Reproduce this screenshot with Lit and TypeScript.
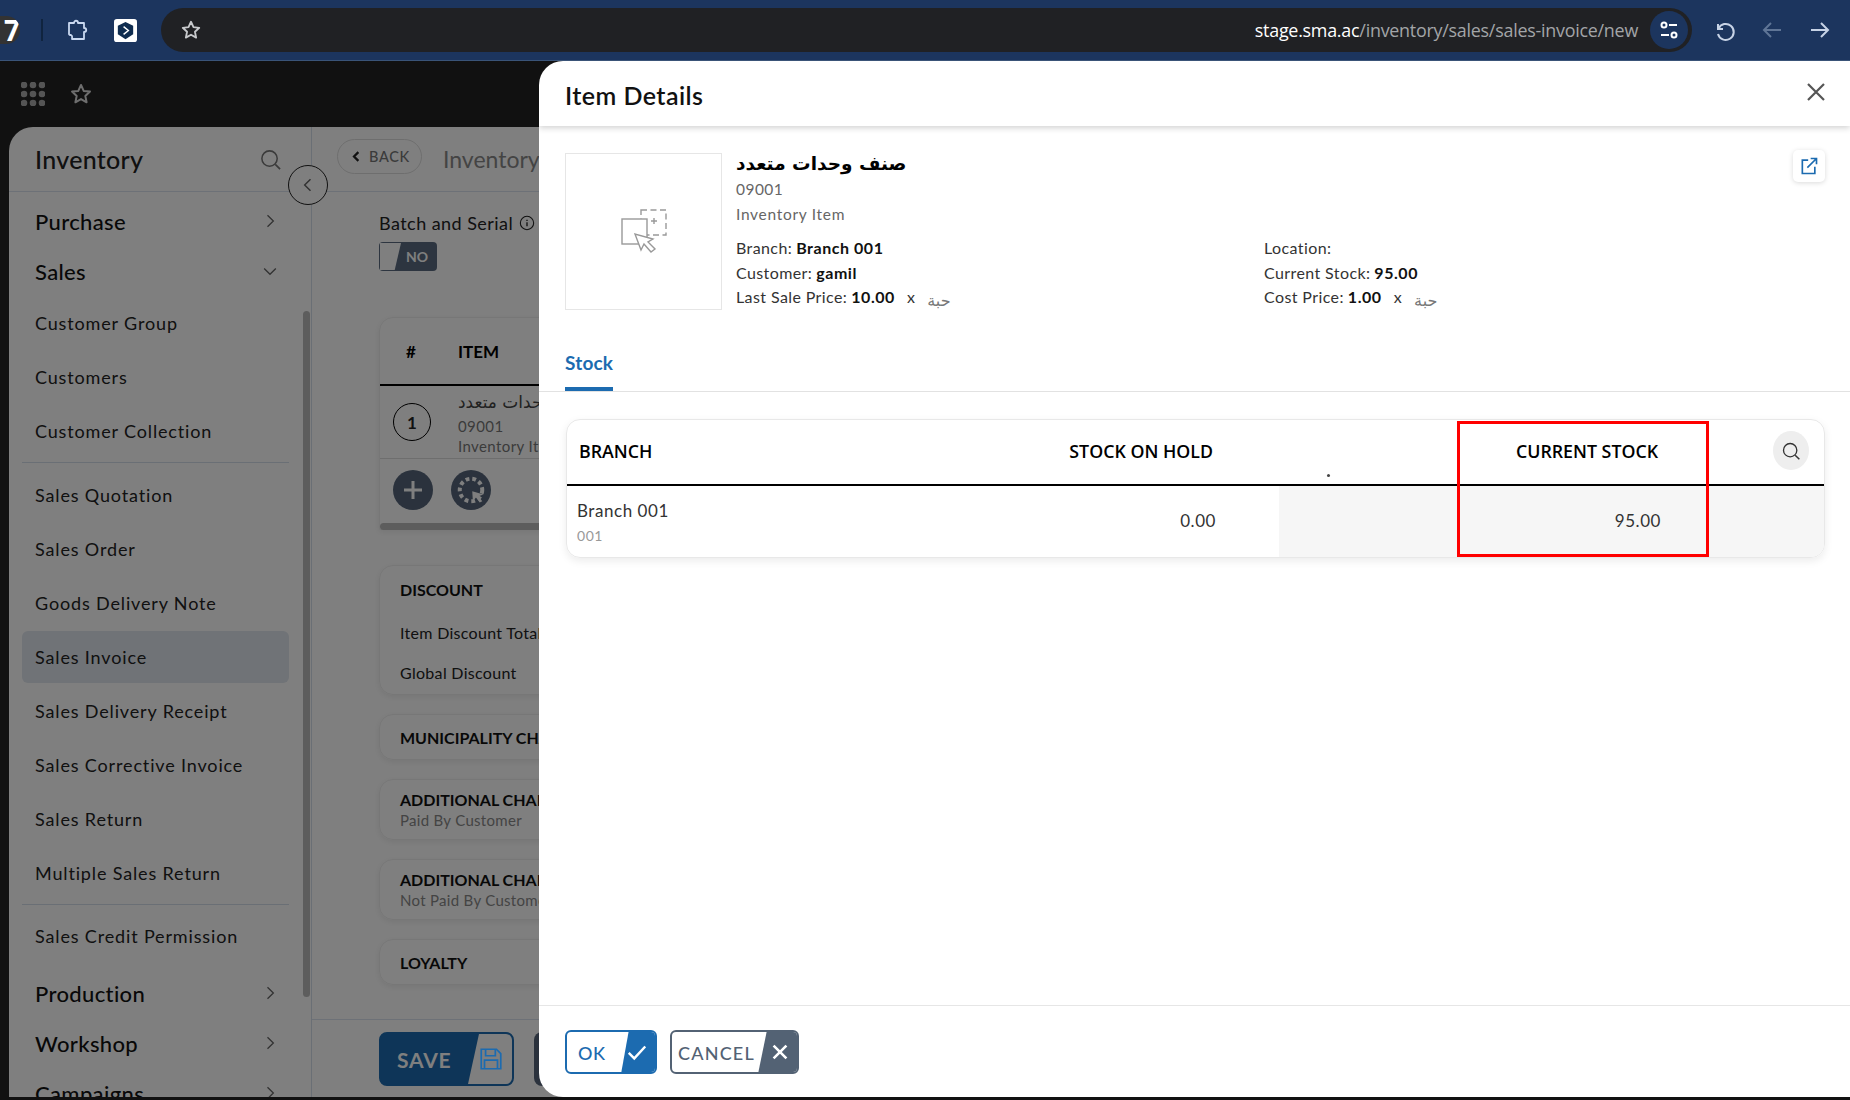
import { LitElement, html, css, svg } from "lit";
import { customElement } from "lit/decorators.js";

const star = svg`<path d="M12 3l2.7 5.9 6.3.7-4.7 4.3 1.3 6.4L12 17.1l-5.6 3.2 1.3-6.4L3 9.6l6.3-.7z" fill="none" stroke="currentColor" stroke-width="2" stroke-linejoin="round"/>`;
const chevRight = svg`<path d="M9 5l7 7-7 7" fill="none" stroke="currentColor" stroke-width="1.6"/>`;
const chevDown = svg`<path d="M5 9l7 7 7-7" fill="none" stroke="currentColor" stroke-width="1.6"/>`;
const search = svg`<circle cx="11" cy="11" r="8" fill="none" stroke="currentColor" stroke-width="1.6"/><path d="M17 17l5 5" stroke="currentColor" stroke-width="1.8" fill="none"/>`;

const icon = (body: unknown, size = 24, cls = "") =>
  html`<svg class=${cls} width=${size} height=${size} viewBox="0 0 24 24">${body}</svg>`;

@customElement("app-root")
export class AppRoot extends LitElement {
  static styles = css`
    :host {
      display: block;
      position: relative;
      width: 1850px;
      height: 1100px;
      overflow: hidden;
      font-family: "Lato", "DejaVu Sans", sans-serif;
      background: #222;
      color: #222;
    }
    .arabic { font-family: "DejaVu Sans", sans-serif; }

    /* browser toolbar */
    .chrome {
      height: 60px;
      border-bottom: 1px solid #3a5478;
      background: #1c355e;
      display: flex;
      align-items: center;
      color: #c7d3e6;
      position: relative;
    }
    .badge {
      width: 20px;
      height: 28px;
      background: #333;
      border-radius: 0 14px 14px 0;
      color: #fff;
      font: 700 28px/28px "Open Sans", sans-serif;
      overflow: hidden;
      flex: none;
      display: flex;
      justify-content: flex-end;
    }
    .divider { width: 2px; height: 22px; background: #10243f; margin: 0 23px 0 21px; flex: none; }
    .puzzle { margin-right: 24px; flex: none; color: #c9d8f0; }
    .logo { flex: none; margin-right: 24px; }
    .url {
      flex: none;
      width: 1531px;
      height: 44px;
      border-radius: 22px;
      background: #202124;
      display: flex;
      align-items: center;
      padding: 0 4px 0 19px;
      box-sizing: border-box;
      color: #c7c9cc;
    }
    .address {
      margin-left: auto;
      margin-right: 12px;
      font: 400 17.9px "Open Sans", sans-serif;
      letter-spacing: -0.25px;
      color: #a3a5a8;
      white-space: nowrap;
    }
    .address b { font-weight: 400; color: #fff; }
    .tune {
      width: 38px;
      height: 38px;
      border-radius: 50%;
      background: #1c355e;
      display: flex;
      align-items: center;
      justify-content: center;
      color: #fff;
    }
    .nav { display: flex; align-items: center; gap: 24px; margin-left: 20px; }
    .nav .off { color: #5f7596; }

    /* app underneath the dialog */
    .appbar { height: 66px; display: flex; align-items: center; gap: 24px; padding-left: 21px; color: #ddd; }
    .panel {
      margin-left: 9px;
      height: 970px;
      background: #fff;
      border-radius: 24px 0 0 0;
      display: flex;
      overflow: hidden;
      position: relative;
    }
    .side { width: 302px; flex: none; border-right: 1px solid #d5deea; position: relative; overflow: hidden; }
    .side-head {
      height: 64px;
      border-bottom: 1px solid #dbe3ee;
      display: flex;
      align-items: center;
      justify-content: space-between;
      padding: 0 29px 0 26px;
      font-size: 25px;
      font-weight: 500;
      letter-spacing: 0.3px;
      color: #222;
    }
    .side-head svg { color: #777; }
    .menu { padding: 4px 0 0 13px; width: 267px; }
    .group {
      height: 50px;
      display: flex;
      align-items: center;
      justify-content: space-between;
      padding: 0 11px 0 13px;
      margin-right: -2px;
      font-size: 22px;
      font-weight: 500;
      letter-spacing: 0.35px;
      color: #111;
    }
    .group svg { color: #666; }
    .link {
      height: 54px;
      display: flex;
      align-items: center;
      padding-left: 13px;
      font-size: 18px;
      letter-spacing: 0.85px;
      border-radius: 6px;
      color: #222;
    }
    .link.on { background: #e0e6ee; height: 52px; margin: 1px 0; }
    .sep { height: 1px; background: #d5deea; margin: 4px 0 5px; }
    .sep.top { margin-top: 4px; margin-bottom: 4px; }
    .gap { height: 5px; }
    .thumb {
      position: absolute;
      left: 294px;
      top: 184px;
      width: 7px;
      height: 686px;
      border-radius: 4px;
      background: #bbb;
    }
    .collapse {
      position: absolute;
      left: 279px;
      top: 38px;
      width: 40px;
      height: 40px;
      box-sizing: border-box;
      border: 1px solid #222;
      border-radius: 50%;
      background: #fff;
      display: flex;
      align-items: center;
      justify-content: center;
      color: #666;
    }

    .main { flex: 1; display: flex; flex-direction: column; min-width: 0; }
    .main-head {
      height: 64px;
      flex: none;
      border-bottom: 1px solid #dbe3ee;
      display: flex;
      align-items: center;
      padding-left: 25px;
      gap: 21px;
      font-size: 23px;
      color: #888;
    }
    .back {
      width: 85px;
      height: 35px;
      box-sizing: border-box;
      margin-bottom: 5px;
      border: 1px solid #ddd;
      border-radius: 18px;
      display: flex;
      align-items: center;
      justify-content: center;
      gap: 5px;
      font-size: 14.5px;
      font-weight: 500;
      letter-spacing: 0.7px;
      color: #777;
    }
    .back svg { color: #222; }
    .content { flex: 1; padding: 19px 0 0 67px; overflow: hidden; }
    .label { font-size: 18px; letter-spacing: 0.45px; display: flex; align-items: center; gap: 6px; height: 24px; color: #222; white-space: nowrap; }
    .switch {
      width: 58px;
      height: 29px;
      margin-top: 7px;
      border-radius: 4px;
      background: #5b6b80;
      position: relative;
      color: #fff;
      font-size: 14px;
      font-weight: 700;
      display: flex;
      align-items: center;
      justify-content: flex-end;
      padding-right: 9px;
      box-sizing: border-box;
      overflow: hidden;
    }
    .switch::before {
      content: "";
      position: absolute;
      left: 1px;
      top: 1px;
      bottom: 1px;
      width: 21px;
      background: #fff;
      clip-path: polygon(0 0, 100% 0, 70% 100%, 0 100%);
    }
    .card {
      width: 900px;
      box-sizing: border-box;
      border: 1px solid #eee;
      border-radius: 14px;
      box-shadow: 0 2px 6px rgba(0, 0, 0, 0.08);
      padding-left: 20px;
      margin-bottom: 20px;
    }
    .item-card { margin-top: 46px; height: 213px; padding: 0; border-radius: 14px 14px 0 0; margin-bottom: 35px; position: relative; }
    .item-head { height: 66px; border-bottom: 2px solid #000; display: flex; align-items: center; font-size: 17px; font-weight: 700; color: #000; }
    .item-head span:first-child { width: 78px; padding-left: 26px; box-sizing: border-box; }
    .item-row { height: 72px; border-bottom: 1px solid #ddd; display: flex; align-items: center; overflow: hidden; }
    .num {
      width: 38px;
      height: 38px;
      margin: 0 27px 0 13px;
      box-sizing: border-box;
      border: 1px solid #000;
      border-radius: 50%;
      display: flex;
      align-items: center;
      justify-content: center;
      font-weight: 700;
      font-size: 17px;
    }
    .item-row div.txt { font-size: 15px; color: #777; line-height: 20px; letter-spacing: 0.4px; }
    .item-row .ar { font-size: 17px; color: #444; line-height: 28px; }
    .item-actions { display: flex; gap: 18px; padding: 11px 0 0 13px; }
    .round { width: 40px; height: 40px; border-radius: 50%; background: #56657a; color: #fff; display: flex; align-items: center; justify-content: center; }
    .hbar { position: absolute; left: 0; right: 0; bottom: -1px; height: 7px; border-radius: 4px; background: #bbb; }
    .sect { font-size: 16px; font-weight: 700; color: #111; }
    .sub { font-size: 15px; color: #888; letter-spacing: 0.3px; }
    .line { font-size: 16px; letter-spacing: 0.3px; color: #222; }
    .discount { height: 130px; padding-top: 14px; box-sizing: border-box; display: flex; flex-direction: column; gap: 24px; }
    .discount .line + .line { margin-top: -3px; }
    .one { height: 46px; display: flex; align-items: center; }
    .two { height: 61px; display: flex; flex-direction: column; justify-content: center; gap: 2px; }
    .stack .card { margin-bottom: 19px; }
    .foot {
      flex: none;
      height: 78px;
      border-top: 1px solid #dbe3ee;
      display: flex;
      align-items: flex-start;
      gap: 20px;
      padding: 12px 0 0 67px;
      box-sizing: border-box;
    }
    .save {
      width: 135px;
      height: 54px;
      box-sizing: border-box;
      border: 2px solid #1c6bb0;
      border-radius: 8px;
      background: #1c6bb0;
      color: #fff;
      font-size: 21px;
      font-weight: 700;
      letter-spacing: 0.8px;
      display: flex;
      align-items: center;
      padding-left: 16px;
      position: relative;
      overflow: hidden;
    }
    .save::after {
      content: "";
      position: absolute;
      right: 0;
      top: 0;
      bottom: 0;
      width: 44px;
      background: #fff;
      clip-path: polygon(25% 0, 100% 0, 100% 100%, 0 100%);
    }
    .save svg { position: absolute; right: 8px; z-index: 1; color: #1c6bb0; }
    .other { width: 120px; height: 54px; background: #56657a; border-radius: 8px; }

    /* dialog */
    .scrim { position: absolute; inset: 61px 0 0 0; background: rgba(0, 0, 0, 0.5); }
    .dialog {
      position: absolute;
      left: 539px;
      top: 61px;
      right: 0;
      height: 1036px;
      background: #fff;
      border-radius: 24px 0 0 24px;
      display: flex;
      flex-direction: column;
      overflow: hidden;
    }
    .d-head {
      height: 65px;
      flex: none;
      box-shadow: 0 2px 6px rgba(0, 0, 0, 0.18);
      display: flex;
      align-items: center;
      justify-content: space-between;
      padding: 2px 22px 0 26px;
      box-sizing: border-box;
      font-size: 25px;
      font-weight: 600;
      letter-spacing: 0.45px;
      color: #111;
      position: relative;
    }
    .d-head svg { color: #555; margin-bottom: 6px; }
    .summary { display: flex; padding: 27px 25px 0 26px; height: 206px; box-sizing: border-box; position: relative; }
    .pic {
      width: 157px;
      height: 157px;
      flex: none;
      box-sizing: border-box;
      border: 1px solid #e6e6e6;
      display: flex;
      align-items: center;
      justify-content: center;
      margin-right: 14px;
    }
    .info { flex: 1; }
    .name { font-size: 18.5px; font-weight: 700; color: #000; line-height: 22px; }
    .code, .kind { font-size: 15.5px; color: #666; letter-spacing: 0.45px; line-height: 25px; }
    .kind { letter-spacing: 0.7px; }
    .code { margin-top: 2px; }
    .facts { display: grid; grid-template-columns: 528px 1fr; margin-top: 9px; font-size: 16px; letter-spacing: 0.4px; line-height: 24.5px; color: #333; }
    .facts b { color: #111; font-weight: 700; margin-left: 4px; letter-spacing: 0.55px; }
    .facts .x { margin: 0 12px; color: #333; }
    .facts .unit { color: #777; font-size: 16px; position: relative; top: 3px; }
    .ext {
      position: absolute;
      right: 25px;
      top: 24px;
      width: 32px;
      height: 32px;
      border-radius: 5px;
      box-shadow: 0 1px 5px rgba(0, 0, 0, 0.15);
      display: flex;
      align-items: center;
      justify-content: center;
      color: #1c6bb0;
    }
    .tabs { height: 60px; flex: none; border-bottom: 1px solid #e2e2e2; padding-left: 26px; box-sizing: border-box; display: flex; align-items: flex-end; }
    .tab { color: #1c6bb0; font-size: 19px; font-weight: 700; height: 42px; box-sizing: border-box; border-bottom: 4px solid #1c6bb0; letter-spacing: 0.2px; line-height: 28px; }
    .table {
      margin: 27px 25px 0 27px;
      height: 139px;
      box-sizing: border-box;
      border: 1px solid #e8e8e8;
      border-radius: 14px;
      box-shadow: 0 3px 8px rgba(0, 0, 0, 0.08);
      display: grid;
      grid-template-columns: 1fr 279px 178px 252px 115px;
      grid-template-rows: 66px 1fr;
      overflow: hidden;
      color: #333;
    }
    .c1 { grid-column: 1; }
    .c2 { grid-column: 2; }
    .c3 { grid-column: 3; }
    .c4 { grid-column: 4; }
    .c5 { grid-column: 5; }
    .th {
      grid-row: 1;
      border-bottom: 2px solid #000;
      display: flex;
      align-items: center;
      padding-bottom: 3px;
      box-sizing: border-box;
      font: 600 17.8px "Open Sans", sans-serif;
      color: #000;
      white-space: nowrap;
    }
    .td { grid-row: 2; display: flex; align-items: center; font-size: 17px; letter-spacing: 0.55px; padding-bottom: 3px; box-sizing: border-box; }
    .pad-l { padding-left: 12px; }
    .to-right { justify-content: flex-end; }
    .th.hold { padding-right: 66px; }
    .th.cur { justify-content: center; padding-left: 8px; }
    .td.hold { padding-right: 63px; background: #fff; }
    .td.grey { background: #f6f6f6; }
    .td.cur { padding-right: 48px; }
    .branch { flex-direction: column; align-items: flex-start; justify-content: center; gap: 6px; padding: 0 0 0 10px; }
    .branch small { font-size: 14px; color: #999; }
    .mark { grid-column: 4; grid-row: 1 / 3; border: 3px solid #f00; margin-top: 1px; z-index: 1; }
    .th.dot { position: relative; }
    .th.dot::after { content: ""; position: absolute; right: 127px; bottom: 7px; width: 3px; height: 3px; border-radius: 50%; background: #444; }
    .find { width: 36px; height: 39px; border-radius: 50%; background: #eee; display: flex; align-items: center; justify-content: center; color: #333; margin-left: 64px; }
    .spacer { flex: 1; }
    .d-foot { height: 92px; flex: none; border-top: 1px solid #e6e6e6; display: flex; gap: 13px; padding: 24px 0 0 26px; box-sizing: border-box; }
    .btn {
      height: 44px;
      box-sizing: border-box;
      border: 2px solid currentColor;
      border-radius: 6px;
      display: flex;
      align-items: center;
      position: relative;
      overflow: hidden;
      font-size: 18px;
      font-weight: 500;
      letter-spacing: 1.2px;
    }
    .btn span { position: relative; top: 1px; }
    .btn svg { position: absolute; z-index: 1; color: #fff; }
    .btn::after {
      content: "";
      position: absolute;
      top: -2px;
      bottom: -2px;
      right: -2px;
      background: currentColor;
      clip-path: polygon(22% 0, 100% 0, 100% 100%, 0 100%);
    }
    .ok { width: 92px; color: #1c6bb0; padding-left: 11px; letter-spacing: 0.6px; }
    .ok::after { width: 36px; }
    .ok svg { right: 7px; }
    .cancel { width: 129px; color: #536274; padding-left: 6px; }
    .cancel::after { width: 41px; }
    .cancel svg { right: 6px; }
  `;

  private sidebar() {
    const first = ["Customer Group", "Customers", "Customer Collection"];
    const second = [
      "Sales Quotation",
      "Sales Order",
      "Goods Delivery Note",
      "Sales Invoice",
      "Sales Delivery Receipt",
      "Sales Corrective Invoice",
      "Sales Return",
      "Multiple Sales Return",
    ];
    const row = (t: string) => html`<div class="link ${t === "Sales Invoice" ? "on" : ""}">${t}</div>`;
    const group = (t: string, open = false) =>
      html`<div class="group">${t}${icon(open ? chevDown : chevRight, 20)}</div>`;
    return html`
      <aside class="side">
        <div class="side-head">Inventory ${icon(search, 23)}</div>
        <div class="menu">
          ${group("Purchase")} ${group("Sales", true)} ${first.map(row)}
          <div class="sep"></div>
          ${second.map(row)}
          <div class="sep top"></div>
          ${row("Sales Credit Permission")}
          <div class="gap"></div>
          ${group("Production")} ${group("Workshop")} ${group("Campaigns")}
        </div>
        <div class="thumb"></div>
      </aside>
    `;
  }

  private mainArea() {
    return html`
      <section class="main">
        <div class="main-head">
          <div class="back">
            ${icon(svg`<path d="M15 5l-7 7 7 7" fill="none" stroke="currentColor" stroke-width="3.6"/>`, 15)} BACK
          </div>
          <span>Inventory</span>
        </div>
        <div class="content">
          <div class="label">
            Batch and Serial
            ${icon(
              svg`<circle cx="12" cy="12" r="10" fill="none" stroke="currentColor" stroke-width="1.6"/><path d="M12 11v6M12 7v2" stroke="currentColor" stroke-width="2"/>`,
              16
            )}
          </div>
          <div class="switch">NO</div>
          <div class="card item-card">
            <div class="item-head"><span>#</span><span>ITEM</span></div>
            <div class="item-row">
              <div class="num">1</div>
              <div class="txt">
                <div class="ar arabic">صنف وحدات متعدد</div>
                <div>09001</div>
                <div>Inventory Item</div>
              </div>
            </div>
            <div class="item-actions">
              <div class="round">${icon(svg`<path d="M12 3v18M3 12h18" stroke="currentColor" stroke-width="3"/>`, 24)}</div>
              <div class="round">
                ${icon(
                  svg`<circle cx="12" cy="12" r="9" fill="none" stroke="currentColor" stroke-width="3.2" stroke-dasharray="3 2.4"/><path d="M13 13l9 2.5-4 1.500 3 4-2 1-3-4-2.500 3z" fill="currentColor"/>`,
                  30
                )}
              </div>
            </div>
            <div class="hbar"></div>
          </div>
          <div class="stack">
            <div class="card discount">
              <div class="sect">DISCOUNT</div>
              <div class="line">Item Discount Total</div>
              <div class="line">Global Discount</div>
            </div>
            <div class="card one"><div class="sect">MUNICIPALITY CHARGES</div></div>
            <div class="card two"><div class="sect">ADDITIONAL CHARGES</div><div class="sub">Paid By Customer</div></div>
            <div class="card two"><div class="sect">ADDITIONAL CHARGES</div><div class="sub">Not Paid By Customer</div></div>
            <div class="card one"><div class="sect">LOYALTY</div></div>
          </div>
        </div>
        <div class="foot">
          <div class="save">
            SAVE
            ${icon(
              svg`<path d="M3 3h14l4 4v14H3z" fill="none" stroke="currentColor" stroke-width="1.6"/><path d="M7 3v6h9V3M6 21v-8h12v8" fill="none" stroke="currentColor" stroke-width="1.600"/>`,
              26
            )}
          </div>
          <div class="other"></div>
        </div>
      </section>
    `;
  }

  private dialog() {
    return html`
      <div class="dialog">
        <header class="d-head">
          Item Details
          ${icon(svg`<path d="M4 4l16 16M20 4L4 20" stroke="currentColor" stroke-width="2.200" fill="none"/>`, 24)}
        </header>
        <div class="summary">
          <div class="pic">
            <svg width="46" height="46" viewBox="0 0 46 46" fill="none" stroke="#999" stroke-width="1.400">
              <rect x="20" y="1" width="25" height="25" stroke-dasharray="6 3.500" />
              <path d="M33 9v6M30 12h6" />
              <rect x="1" y="10" width="25" height="25" fill="#fff" />
              <path d="M14 25l6 16 3-6 7 8 4-3-7-7 5-3z" fill="#fff" />
            </svg>
          </div>
          <div class="info">
            <div class="name arabic">صنف وحدات متعدد</div>
            <div class="code">09001</div>
            <div class="kind">Inventory Item</div>
            <div class="facts">
              <div>Branch:<b>Branch 001</b></div>
              <div>Location:</div>
              <div>Customer:<b>gamil</b></div>
              <div>Current Stock:<b>95.00</b></div>
              <div>Last Sale Price:<b>10.00</b><span class="x">x</span><span class="unit arabic">حبة</span></div>
              <div>Cost Price:<b>1.00</b><span class="x">x</span><span class="unit arabic">حبة</span></div>
            </div>
          </div>
          <div class="ext">
            ${icon(
              svg`<path d="M11 5H4v16h15v-8" fill="none" stroke="currentColor" stroke-width="2"/><path d="M10 14L21 3M14 3h7v7" fill="none" stroke="currentColor" stroke-width="2"/>`,
              20
            )}
          </div>
        </div>
        <div class="tabs"><div class="tab">Stock</div></div>
        <div class="table">
          <div class="th c1 pad-l">BRANCH</div>
          <div class="th c2 hold to-right">STOCK ON HOLD</div>
          <div class="th c3 dot"></div>
          <div class="th c4 cur">CURRENT STOCK</div>
          <div class="th c5"><div class="find">${icon(search, 20)}</div></div>
          <div class="td c1 branch">Branch 001<small>001</small></div>
          <div class="td c2 hold to-right">0.00</div>
          <div class="td c3 grey"></div>
          <div class="td c4 grey cur to-right">95.00</div>
          <div class="td c5 grey"></div>
          <div class="mark"></div>
        </div>
        <div class="spacer"></div>
        <footer class="d-foot">
          <div class="btn ok">
            <span>OK</span>
            ${icon(svg`<path d="M3 13l6 6L21 6" fill="none" stroke="currentColor" stroke-width="2.600"/>`, 22)}
          </div>
          <div class="btn cancel">
            <span>CANCEL</span>
            ${icon(svg`<path d="M5 5l14 14M19 5L5 19" fill="none" stroke="currentColor" stroke-width="2.800"/>`, 22)}
          </div>
        </footer>
      </div>
    `;
  }

  render() {
    return html`
      <div class="chrome">
        <div class="badge">7</div>
        <div class="divider"></div>
        <svg class="puzzle" width="24" height="24" viewBox="0 0 24 24" fill="none" stroke="currentColor" stroke-width="1.800">
          <path d="M3 5h5c0-3 4-3 4 0h6v5c3 0 3 4 0 4v7H6c0-1 1-3-1-4-1 0-2 0-2-1V5z" stroke-linejoin="round" />
        </svg>
        <svg class="logo" width="23" height="23" viewBox="0 0 24 24">
          <rect x="0" y="0" width="24" height="24" rx="3" fill="#fff" />
          <path d="M12 3l8 4v9l-8 5-8-5V7z" fill="#0f2c4f" />
          <path d="M10 8l5 4-5 4" fill="none" stroke="#fff" stroke-width="1.500" />
        </svg>
        <div class="url">
          ${icon(star, 22)}
          <div class="address"><b>stage.sma.ac</b>/inventory/sales/sales-invoice/new</div>
          <div class="tune">
            <svg width="20" height="20" viewBox="0 0 20 20" fill="none" stroke="#fff" stroke-width="2">
              <circle cx="5" cy="5" r="2.500" /><path d="M10 5h8M2 15h8" /><circle cx="15" cy="15" r="2.500" />
            </svg>
          </div>
        </div>
        <div class="nav">
          ${icon(
            svg`<path d="M6 6v5h5M6.500 10.500A8 8 0 1 1 6 16" fill="none" stroke="currentColor" stroke-width="2"/>`,
            24
          )}
          ${icon(svg`<path d="M21 12H4M11 5l-7 7 7 7" fill="none" stroke="currentColor" stroke-width="2"/>`, 24, "off")}
          ${icon(svg`<path d="M3 12h17M13 5l7 7-7 7" fill="none" stroke="currentColor" stroke-width="2"/>`, 24)}
        </div>
      </div>
      <div class="appbar">
        <svg width="24" height="24" viewBox="0 0 24 24" fill="#aaa">
          ${[3, 12, 21].map((y) => [3, 12, 21].map((x) => svg`<circle cx=${x} cy=${y} r="3.300" />`))}
        </svg>
        ${icon(star, 24)}
      </div>
      <div class="panel">
        ${this.sidebar()} ${this.mainArea()}
        <div class="collapse">
          ${icon(svg`<path d="M15 5l-7 7 7 7" fill="none" stroke="currentColor" stroke-width="1.800"/>`, 20)}
        </div>
      </div>
      <div class="scrim"></div>
      ${this.dialog()}
    `;
  }
}
